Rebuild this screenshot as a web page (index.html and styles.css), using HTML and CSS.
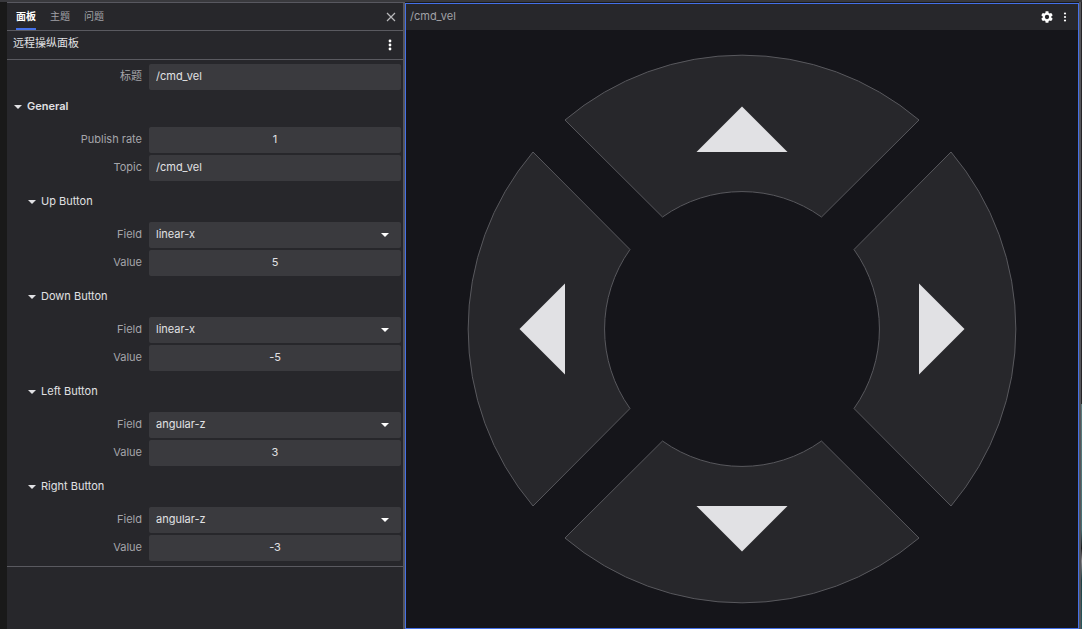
FILE: index.html
```html
<!DOCTYPE html>
<html lang="zh-CN">
<head>
<meta charset="utf-8">
<title>/cmd_vel</title>
<link rel="stylesheet" href="styles.css">
</head>
<body>
<div class="app">
  <aside class="sidebar">
    <nav class="tabs">
      <button class="tab active">面板</button>
      <button class="tab">主题</button>
      <button class="tab">问题</button>
      <button class="icon-button close" aria-label="关闭"><svg width="10" height="10" viewBox="0 0 10 10"><path d="M1 1l8 8M9 1L1 9" stroke="#b8b8bb" stroke-width="1.2"/></svg></button>
    </nav>
    <header class="panel-name">
      <h1 class="panel-title">远程操纵面板</h1>
      <button class="icon-button" aria-label="更多"><svg width="4" height="12" viewBox="0 0 4 12" fill="#fff"><circle cx="2" cy="2" r="1.4"/><circle cx="2" cy="6" r="1.4"/><circle cx="2" cy="10" r="1.4"/></svg></button>
    </header>
    <form class="settings">
      <div class="row"><label class="label" for="title">标题</label><input class="field" id="title" value="/cmd_vel"></div>
      <button type="button" class="group general"><span class="caret"></span><span class="group-name">General</span></button>
      <div class="row"><label class="label" for="rate">Publish rate</label><input class="field number" id="rate" inputmode="numeric" value="1"></div>
      <div class="row"><label class="label" for="topic">Topic</label><input class="field" id="topic" value="/cmd_vel"></div>

      <button type="button" class="group nested"><span class="caret"></span><span class="group-name">Up Button</span></button>
      <div class="row"><label class="label" for="up-field">Field</label><select class="field select" id="up-field"><option>linear-x</option></select></div>
      <div class="row"><label class="label" for="up-value">Value</label><input class="field number" id="up-value" inputmode="numeric" value="5"></div>

      <button type="button" class="group nested"><span class="caret"></span><span class="group-name">Down Button</span></button>
      <div class="row"><label class="label" for="down-field">Field</label><select class="field select" id="down-field"><option>linear-x</option></select></div>
      <div class="row"><label class="label" for="down-value">Value</label><input class="field number" id="down-value" inputmode="numeric" value="-5"></div>

      <button type="button" class="group nested"><span class="caret"></span><span class="group-name">Left Button</span></button>
      <div class="row"><label class="label" for="left-field">Field</label><select class="field select" id="left-field"><option>angular-z</option></select></div>
      <div class="row"><label class="label" for="left-value">Value</label><input class="field number" id="left-value" inputmode="numeric" value="3"></div>

      <button type="button" class="group nested"><span class="caret"></span><span class="group-name">Right Button</span></button>
      <div class="row"><label class="label" for="right-field">Field</label><select class="field select" id="right-field"><option>angular-z</option></select></div>
      <div class="row"><label class="label" for="right-value">Value</label><input class="field number" id="right-value" inputmode="numeric" value="-3"></div>
    </form>
  </aside>
  <main class="panel">
    <header class="panel-bar">
      <span class="panel-topic">/cmd_vel</span>
      <button class="icon-button" aria-label="设置"><svg width="12" height="12" viewBox="2 2 20 20"><path fill="#fff" d="M19.14 12.94c.04-.3.06-.61.06-.94 0-.32-.02-.64-.07-.94l2.03-1.58c.18-.14.23-.41.12-.61l-1.92-3.32c-.12-.22-.37-.29-.59-.22l-2.39.96c-.5-.38-1.03-.7-1.62-.94l-.36-2.54c-.04-.24-.24-.41-.48-.41h-3.84c-.24 0-.43.17-.47.41l-.36 2.54c-.59.24-1.13.57-1.62.94l-2.39-.96c-.22-.08-.47 0-.59.22L2.74 8.87c-.12.21-.08.47.12.61l2.03 1.58c-.05.3-.09.63-.09.94s.02.64.07.94l-2.03 1.58c-.18.14-.23.41-.12.61l1.92 3.32c.12.22.37.29.59.22l2.39-.96c.5.38 1.03.7 1.62.94l.36 2.54c.05.24.24.41.48.41h3.84c.24 0 .44-.17.47-.41l.36-2.54c.59-.24 1.13-.56 1.62-.94l2.39.96c.22.08.47 0 .59-.22l1.92-3.32c.12-.22.07-.47-.12-.61l-2.01-1.58zM12 15.6A3.6 3.6 0 1 1 12 8.4a3.6 3.6 0 0 1 0 7.2z"/></svg></button>
      <button class="icon-button" aria-label="更多"><svg width="4" height="10" viewBox="0 0 4 10" fill="#fff"><circle cx="2" cy="1.5" r="1.1"/><circle cx="2" cy="5" r="1.1"/><circle cx="2" cy="8.5" r="1.1"/></svg></button>
    </header>
    <div class="pad">
      <svg class="wheel" viewBox="-275 -275 550 550">
        <g role="button" aria-label="Up"><path class="segment" d="M-177 -209A274 274 0 0 1 177 -209L79.500 -112A137 137 0 0 0 -79.500 -112Z"/><path class="arrow" d="M0 -222.500L45.500 -177H-45.500Z"/></g>
        <g role="button" aria-label="Down"><path class="segment" d="M-177 209A274 274 0 0 0 177 209L79.500 112A137 137 0 0 1 -79.500 112Z"/><path class="arrow" d="M0 222.500L45.500 177H-45.500Z"/></g>
        <g role="button" aria-label="Left"><path class="segment" d="M-209 -177A274 274 0 0 0 -209 177L-112 79.500A137 137 0 0 1 -112 -79.500Z"/><path class="arrow" d="M-222.500 0L-177 45.500V-45.500Z"/></g>
        <g role="button" aria-label="Right"><path class="segment" d="M209 -177A274 274 0 0 1 209 177L112 79.500A137 137 0 0 0 112 -79.500Z"/><path class="arrow" d="M222.500 0L177 45.500V-45.500Z"/></g>
      </svg>
    </div>
  </main>
  <div class="edge"></div>
</div>
</body>
</html>
```
FILE: styles.css
```css
* { box-sizing: border-box; }
body {
  margin: 0;
  background: #191919;
  color: #e1e1e4;
  font: 11px/16px Inter, "Noto Sans CJK SC", sans-serif;
}
button, input, select { font: inherit; color: inherit; border: 0; margin: 0; }
button { background: none; padding: 0; cursor: pointer; }

.app {
  display: grid;
  grid-template-columns: 7px minmax(0, 398fr) minmax(0, 674fr) 3px;
  min-height: 100vh;
  border-top: 2px solid #39393d;
}
.sidebar {
  grid-column: 2;
  background: #27272b;
  border-top: 1px solid #585860;
  border-right: 2px solid #56565b;
}
.tabs {
  display: flex;
  gap: 14px;
  height: 28px;
  padding: 0 7px 0 9px;
  border-bottom: 1px solid #5a5a60;
}
.tab { color: #a1a1a6; border-bottom: 2px solid transparent; font-size: 10px; }
.tab.active { color: #fff; font-weight: 700; border-bottom-color: #4470e8; }
.icon-button { display: flex; align-items: center; justify-content: center; }
.close { margin-left: auto; }
.panel-name {
  display: flex;
  justify-content: space-between;
  height: 29px;
  padding: 0 11px 0 6px;
  border-bottom: 1px solid #5a5a60;
}
.panel-title { margin: 0; padding-top: 4px; font-size: 11px; font-weight: 400; }
.settings { padding: 4px 2px 5px 0; border-bottom: 1px solid #5a5a60; }
.row {
  display: grid;
  grid-template-columns: minmax(0, 135fr) minmax(0, 252fr);
  column-gap: 7px;
  height: 26px;
  margin-bottom: 2px;
}
.row:last-child { margin-bottom: 0; }
.label { color: #a5a5aa; text-align: right; padding-top: 4px; }
.field {
  width: 100%;
  min-width: 0;
  height: 26px;
  padding: 0 7px 2px;
  border-radius: 2px;
  background-color: #3a3a3e;
  outline: none;
}
.number { text-align: center; }
.select {
  appearance: none;
  background-image: url("data:image/svg+xml,%3Csvg xmlns='http://www.w3.org/2000/svg' width='8' height='4'%3E%3Cpath d='M0 0h8L4 4z' fill='white'/%3E%3C/svg%3E");
  background-repeat: no-repeat;
  background-position: right 12px center;
}
.group { display: flex; align-items: center; width: 100%; gap: 5px; }
.group-name { padding-bottom: 2px; }
.general { height: 35px; padding: 0 0 6px 7px; font-weight: 600; }
.nested { height: 39px; padding: 0 0 2px 21px; }
.caret {
  margin-top: 1px;
  border: 4px solid transparent;
  border-top-color: #e1e1e4;
  border-bottom: 0;
}

.panel {
  display: flex;
  flex-direction: column;
  background: #15151a;
  border: 1px solid #4470e8;
  margin: 1px 0;
}
.panel-bar {
  display: flex;
  align-items: center;
  gap: 10px;
  height: 26px;
  padding: 0 11px 0 4px;
  background: #27272b;
}
.panel-topic { margin-right: auto; padding-bottom: 3px; color: #a1a1a6; }
.pad { flex: 1; display: flex; min-height: 0; padding: 24px; }
.wheel { flex: 1; min-width: 0; max-height: calc(100vh - 79px); }
.segment { fill: #27272b; stroke: #58585d; stroke-width: 1; }
.arrow { fill: #e1e1e4; }
.edge {
  background: linear-gradient(#252528 64%, #5b7c7e 64%, #456f74 84%, #17191c 87%, #858589 89%, #1d4044 92%, #28595d);
  border-left: 2px solid #56565b;
}
```
